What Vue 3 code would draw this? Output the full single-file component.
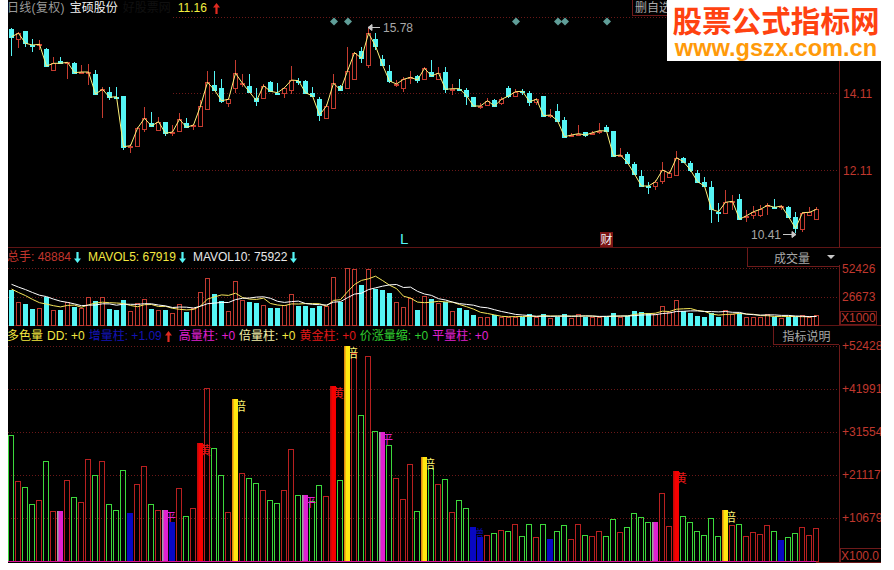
<script setup>
import { computed } from 'vue'

// all chart data is in page pixels x3, read off the chart: [type, top, bottom, wickTop, wickBottom]
const candleRows = [
  ['c',87,110,85,168],['r',100,118,95,143],['c',93,130,93,140],['c',135,135,118,155],['r',133,133,120,150],
  ['c',148,198,143,200],['r',190,210,172,210],['c',184,190,170,190],['r',187,187,185,236],['c',190,218,187,220],
  ['r',216,216,195,222],['r',216,216,193,255],['c',222,282,210,285],['r',268,268,262,355],['c',277,292,262,300],
  ['c',290,290,262,295],['c',287,440,287,451],['r',437,437,432,460],['r',385,438,382,440],['r',355,388,322,395],
  ['c',370,378,336,380],['r',365,390,352,390],['c',365,400,365,408],['r',396,396,375,408],['r',358,393,340,393],
  ['c',370,382,355,385],['r',375,375,372,390],['r',318,377,300,378],['r',247,327,213,330],['c',255,270,213,272],
  ['c',264,302,236,310],['r',298,308,295,320],['r',220,265,180,278],['r',250,250,222,260],['c',258,276,222,280],
  ['c',295,302,265,318],['r',257,294,252,297],['c',245,274,242,277],['c',278,278,250,282],['r',263,280,260,293],
  ['r',240,270,197,282],['c',242,242,235,255],['c',243,278,240,282],['c',280,288,262,290],['c',296,345,292,362],
  ['r',318,353,313,354],['r',250,323,222,325],['c',258,270,256,272],['r',213,264,140,266],['r',158,236,155,237],
  ['c',153,175,140,190],['r',100,195,85,203],['c',117,138,100,150],['c',177,195,165,197],['c',213,243,195,248],
  ['r',252,252,240,262],['r',238,263,230,275],['r',232,232,212,252],['c',228,240,225,248],['r',205,236,202,240],
  ['c',215,228,180,232],['r',219,238,202,240],['c',215,268,200,280],['r',266,266,252,285],['c',266,266,238,268],
  ['c',270,287,265,315],['c',292,318,290,320],['r',318,318,310,328],['r',302,315,295,318],['c',300,318,296,322],
  ['r',298,310,290,315],['c',265,288,258,295],['r',275,287,268,288],['c',274,274,268,285],['c',278,305,272,318],
  ['r',298,306,293,315],['c',289,347,288,349],['r',345,345,326,355],['c',334,362,312,365],['c',360,410,352,412],
  ['r',405,405,400,410],['r',401,401,375,405],['c',397,405,395,412],['r',398,398,392,406],['r',392,392,370,402],
  ['c',380,393,375,395],['c',393,468,393,470],['r',465,465,445,468],['c',462,488,457,492],['c',492,522,485,525],
  ['c',528,558,510,562],['c',558,558,545,582],['r',545,558,540,570],['r',510,543,485,552],['r',520,530,512,530],
  ['r',473,525,452,525],['c',473,485,470,488],['c',488,510,482,515],['c',520,545,510,550],['c',546,558,532,562],
  ['c',562,628,543,668],['c',635,635,608,665],['r',607,638,570,640],['r',604,604,585,630],['c',598,658,582,660],
  ['r',647,647,630,665],['r',635,645,618,658],['r',628,645,615,650],['r',616,616,608,646],['c',622,622,598,627],
  ['r',618,618,614,630],['c',620,650,618,652],['c',652,685,637,700],['r',638,688,635,696],['r',637,644,622,645],
  ['r',628,656,622,660],
]

const volumeRows = [
  ['c',150],['r',187],['c',192],['c',207],['r',204],['c',172],['r',210],['c',210],['r',185],['c',200],
  ['r',205],['r',172],['c',184],['r',172],['c',207],['c',210],['c',180],['r',213],['r',190],['r',178],
  ['c',207],['r',210],['c',210],['r',220],['r',193],['c',215],['r',205],['r',157],['r',115],['c',162],
  ['c',184],['r',213],['r',124],['r',180],['c',186],['c',188],['r',195],['c',203],['c',203],['r',195],
  ['r',162],['c',197],['c',197],['c',203],['c',197],['r',197],['r',112],['c',186],['r',85],['r',88],
  ['c',135],['r',88],['c',147],['c',150],['c',158],['r',186],['r',202],['r',175],['c',210],['r',168],
  ['c',178],['r',188],['c',185],['r',213],['c',204],['c',210],['c',225],['r',232],['r',232],['c',225],
  ['r',230],['r',232],['r',230],['c',230],['c',222],['r',232],['c',222],['r',234],['c',230],['c',222],
  ['r',234],['r',223],['c',230],['r',232],['r',232],['c',230],['c',218],['r',230],['c',228],['c',212],
  ['c',216],['c',220],['r',222],['r',198],['r',217],['r',181],['c',214],['c',218],['c',228],['c',230],
  ['c',220],['c',230],['r',210],['r',222],['c',218],['r',232],['r',232],['r',230],['r',223],['c',230],
  ['r',234],['c',230],['c',230],['r',226],['r',232],['r',226],
]

const flowRows = [
  ['g',271],['r',409],['g',427],['g',478],['r',466],['g',349],['r',499],['m',498],['r',406],['g',457],
  ['r',472],['r',343],['g',391],['r',349],['g',478],['g',496],['g',376],['b',504],['r',418],['r',364],
  ['g',478],['r',496],['m',496],['b',530],['r',430],['g',514],['r',490],['R',294],['r',130],['g',310],
  ['g',391],['r',502],['Y',162],['r',385],['g',400],['g',415],['r',436],['g',466],['g',475],['r',436],
  ['r',313],['g',451],['m',450],['g',469],['g',421],['r',454],['R',124],['g',406],['Y',4],['r',25],
  ['g',211],['r',34],['g',259],['m',262],['g',301],['r',400],['r',463],['r',358],['g',499],['Y',337],
  ['g',370],['r',418],['g',403],['r',502],['g',466],['g',490],['b',546],['b',576],['r',571],['g',565],
  ['r',556],['g',559],['r',538],['g',574],['g',538],['r',577],['g',538],['b',582],['g',559],['g',541],
  ['r',583],['r',538],['g',571],['r',574],['r',559],['g',574],['g',523],['r',562],['g',547],['g',505],
  ['g',517],['g',532],['m',532],['r',445],['r',544],['R',379],['g',514],['g',532],['g',559],['g',571],
  ['g',520],['g',574],['Y',496],['r',541],['g',538],['r',574],['r',562],['r',568],['r',541],['g',559],
  ['b',586],['g',577],['g',565],['r',547],['r',571],['r',550],
]

const signalLabels = { m: '平', b: '增', R: '黄', Y: '倍' }
// these bars have their label hidden behind the next column in the terminal
const unlabelled = [7, 17, 23, 67, 77, 92, 110]

const priceGrid = [17.5, 93.5, 170.5]
const volumeGrid = [268.5, 297.5]
const flowGrid = [346.5, 389.5, 432.5, 475.5, 518.5]
const diamonds = [334, 348, 516, 558, 565, 607]
const priceTicks = [
  { y: 94, text: '14.11' },
  { y: 171, text: '12.11' },
]
const volumeTicks = [
  { y: 269, text: '52426' },
  { y: 297, text: '26673' },
]
const flowTicks = [
  { y: 346, text: '+52428' },
  { y: 389, text: '+41991' },
  { y: 432, text: '+31554' },
  { y: 475, text: '+21117' },
  { y: 518, text: '+10679' },
]

const candles = computed(() =>
  candleRows.map(([kind, top, bottom, wickTop, wickBottom], i) => {
    const y = Math.round(top / 3) + 0.5
    return {
      kind,
      x: 9.5 + 7 * i,
      cx: 11.5 + 7 * i,
      y,
      h: Math.max(Math.round(bottom / 3) + 0.5 - y, 1),
      wickTop: wickTop / 3,
      wickBottom: wickBottom / 3,
      close: (kind === 'c' ? bottom : top) / 3,
    }
  }),
)

const closeLine = computed(() => candles.value.map((c) => `${c.cx},${c.close.toFixed(1)}`).join(' '))

const volumes = computed(() =>
  volumeRows.map(([kind, top], i) => {
    const y = Math.round(240 + top / 3) + 0.5
    return { kind, x: 9.5 + 7 * i, y, h: 325 - y, value: 255 - top }
  }),
)

function movingAverage(size) {
  const before = [150, 140, 135, 130, 125, 120, 110, 105, 100]
  const values = [...before, ...volumeRows.map(([, top]) => 255 - top)]
  const points = []
  for (let i = 0; i < volumeRows.length; i++) {
    const end = i + before.length + 1
    const slice = values.slice(end - size, end)
    const avg = slice.reduce((sum, v) => sum + v, 0) / size
    points.push(`${11.5 + 7 * i},${(240 + (255 - avg) / 3).toFixed(1)}`)
  }
  return points.join(' ')
}

const volumeMa5 = computed(() => movingAverage(5))
const volumeMa10 = computed(() => movingAverage(10))

const flowBars = computed(() =>
  flowRows.map(([kind, top], i) => ({
    kind,
    x: 8 + 7 * i,
    top: Math.round(345 + top / 3),
    label: unlabelled.includes(i) ? '' : signalLabels[kind] || '',
    solid: kind in signalLabels,
  })),
)
const hollowBars = computed(() => flowBars.value.filter((b) => !b.solid))
const solidBars = computed(() => flowBars.value.filter((b) => b.solid))
const labelledBars = computed(() => flowBars.value.filter((b) => b.label))
</script>

<template>
  <div class="terminal">
    <section class="pane pane--price">
      <div class="pane__head title-row">
        <span class="period">日线(复权)</span>
        <span class="stock">宝硕股份</span>
        <span class="ghost">好股票网</span>
        <span class="last">11.16</span>
        <svg class="arrow arrow--last" viewBox="0 0 7 11"><path d="M3.5 0 7 4.5H4.6V11H2.4V4.5H0Z" fill="#e02a20" /></svg>
      </div>
      <svg class="chart chart--price" viewBox="8 16 873 231">
        <line v-for="y in priceGrid" :key="y" class="grid" x1="173" x2="839" :y1="y" :y2="y" />
        <line class="axis" x1="839.5" x2="839.5" y1="16" y2="247" />
        <path v-for="x in diamonds" :key="x" class="diamond" :d="`M${x} 17.5l4 4-4 4-4-4z`" />
        <g v-for="c in candles" :key="c.x" :class="`candle candle--${c.kind}`">
          <line class="wick" :x1="c.cx" :x2="c.cx" :y1="c.wickTop" :y2="c.wickBottom" />
          <rect class="body" :x="c.x" :y="c.y" width="4" :height="c.h" />
        </g>
        <polyline class="close-line" :points="closeLine" />
        <path class="mark-line" d="M368 27.5h12M368 27.5l4-3v6z" />
        <text class="mark" x="383" y="32">15.78</text>
        <text class="mark" x="751" y="238.5">10.41</text>
        <path class="mark-line" d="M783 234.5h13M796 234.5l-4-3v6z" />
        <text class="flag-l" x="400" y="244">L</text>
        <rect class="flag-box" x="600" y="232" width="13" height="15" />
        <text class="flag-cai" x="600.5" y="244">财</text>
        <text v-for="t in priceTicks" :key="t.y" class="tick" x="843" :y="t.y + 4">{{ t.text }}</text>
      </svg>
      <button class="pick-btn" type="button">删自选</button>
    </section>

    <section class="pane pane--volume">
      <div class="pane__head">
        <span class="red first">总手: 48884</span>
        <svg class="arrow" viewBox="0 0 7 11"><path d="M3.5 11 7 6.5H4.6V0H2.4V6.5H0Z" fill="#55f5f5" /></svg>
        <span class="yellow gap">MAVOL5: 67919</span>
        <svg class="arrow" viewBox="0 0 7 11"><path d="M3.5 11 7 6.5H4.6V0H2.4V6.5H0Z" fill="#55f5f5" /></svg>
        <span class="white gap">MAVOL10: 75922</span>
        <svg class="arrow" viewBox="0 0 7 11"><path d="M3.5 11 7 6.5H4.6V0H2.4V6.5H0Z" fill="#55f5f5" /></svg>
      </div>
      <svg class="chart chart--volume" viewBox="8 265 873 60">
        <line v-for="y in volumeGrid" :key="y" class="grid" x1="8" x2="839" :y1="y" :y2="y" />
        <line class="axis" x1="839.5" x2="839.5" y1="265" y2="325" />
        <rect
          v-for="v in volumes"
          :key="v.x"
          :class="`vol vol--${v.kind}`"
          :x="v.x"
          :y="v.y"
          width="4"
          :height="v.h"
        />
        <polyline class="ma ma--five" :points="volumeMa5" />
        <polyline class="ma ma--ten" :points="volumeMa10" />
        <text v-for="t in volumeTicks" :key="t.y" class="tick" x="842" :y="t.y + 4">{{ t.text }}</text>
        <rect class="unit-box" x="840.5" y="311.5" width="36" height="13" />
        <text class="tick" x="841" y="322">X1000</text>
      </svg>
      <button class="corner-btn corner-btn--volume" type="button">
        成交量
        <i class="caret"></i>
      </button>
    </section>

    <section class="pane pane--flow">
      <div class="pane__head flow-head">
        <span class="yellow first">多色量</span>
        <span class="yellow">DD: +0</span>
        <span class="navy">增量柱: +1.09</span>
        <svg class="arrow arrow--tight" viewBox="0 0 7 11"><path d="M3.5 0 7 4.5H4.6V11H2.4V4.5H0Z" fill="#e02a20" /></svg>
        <span class="magenta gap-s">高量柱: +0</span>
        <span class="cream">倍量柱: <b>+0</b></span>
        <span class="red-bright">黄金柱: +0</span>
        <span class="green">价涨量缩: +0</span>
        <span class="magenta">平量柱: +0</span>
      </div>
      <svg class="chart chart--flow" viewBox="8 345 873 218">
        <defs>
          <clipPath id="flow-plot"><rect x="8" y="346" width="831" height="217" /></clipPath>
        </defs>
        <line v-for="y in flowGrid" :key="y" class="grid" x1="8" x2="839" :y1="y" :y2="y" />
        <line class="axis" x1="839.5" x2="839.5" y1="345" y2="563" />
        <g clip-path="url(#flow-plot)">
          <rect
            v-for="b in hollowBars"
            :key="b.x"
            :class="`flow flow--${b.kind}`"
            :x="b.x + 0.5"
            :y="b.top + 0.5"
            width="5"
            :height="561 - b.top"
          />
          <text
            v-for="b in labelledBars"
            :key="`label-${b.x}`"
            :class="`signal signal--${b.kind}`"
            :x="b.x + 2"
            :y="b.top + 12"
          >{{ b.label }}</text>
          <g v-for="b in solidBars" :key="`solid-${b.x}`">
            <rect :class="`flow flow--${b.kind}`" :x="b.x" :y="b.top" width="6" :height="561 - b.top" />
            <rect :class="`edge edge--${b.kind}`" :x="b.x" :y="b.top" width="1.5" :height="561 - b.top" />
          </g>
        </g>
        <line class="baseline" x1="8" x2="816" y1="561.5" y2="561.5" />
        <line class="axis" x1="816" x2="839" y1="562.5" y2="562.5" />
        <text v-for="t in flowTicks" :key="t.y" class="tick" x="842" :y="t.y + 4">{{ t.text }}</text>
        <rect class="unit-box" x="840.5" y="548.5" width="42" height="14" />
        <text class="tick" x="841" y="560">X100.0</text>
      </svg>
      <button class="corner-btn corner-btn--flow" type="button">指标说明</button>
    </section>

    <div class="stamp">
      <p class="stamp__name">股票公式指标网</p>
      <p class="stamp__url">www.gszx.com.cn</p>
    </div>
  </div>
</template>

<style>
html,
body {
  margin: 0;
  background: #fff;
}
</style>

<style scoped>
.terminal {
  position: relative;
  display: flex;
  flex-direction: column;
  width: 873px;
  height: 563px;
  margin-left: 8px;
  overflow: hidden;
  background: #000;
  font-family: "Liberation Sans", "Noto Sans CJK SC", sans-serif;
  font-size: 12px;
}

.pane {
  position: relative;
  flex: none;
}

.pane--price,
.pane--volume {
  border-bottom: 1px solid #5e1414;
}

.pane--price {
  height: 247px;
}

.pane--volume {
  height: 77px;
}

.pane--flow {
  height: 237px;
}

.pane__head {
  display: flex;
  align-items: center;
  box-sizing: border-box;
  height: 17px;
  padding-top: 2px;
  white-space: nowrap;
  line-height: 15px;
  overflow: hidden;
}

.title-row {
  height: 16px;
  padding-top: 1px;
  line-height: 15px;
  color: #a8a8a8;
}

.period {
  margin-left: -1px;
  color: #9a9a9a;
  letter-spacing: 0.3px;
}

.stock {
  margin-left: 5px;
  color: #f2f2f2;
}

.ghost {
  margin-left: 5px;
  color: #101010;
}

.last {
  margin-left: 7px;
  color: #f4f040;
}

.arrow {
  flex: none;
  width: 7px;
  height: 11px;
  margin-left: 3px;
}

.arrow--last {
  margin-left: 6px;
}

.arrow--tight {
  margin-left: -1px;
}

.first {
  margin-left: -1px;
}

.gap {
  margin-left: 7px;
}

.gap-s {
  margin-left: 3px;
}

.red {
  color: #c2362e;
}

.yellow {
  color: #f4e840;
}

.white {
  color: #e8e8e8;
}

.navy {
  color: #1414b4;
}

.magenta {
  color: #e020d0;
}

.cream {
  color: #f4f0a8;
}

.cream b {
  font-weight: 400;
  color: #f4e840;
}

.red-bright {
  color: #e01818;
}

.green {
  color: #30d030;
}

.flow-head {
  height: 19px;
  gap: 4px;
}

.chart {
  display: block;
  width: 873px;
  overflow: visible;
}

.chart--price {
  height: 231px;
}

.chart--volume {
  height: 60px;
}

.chart--flow {
  height: 218px;
}

.grid {
  stroke: #6a1818;
  stroke-width: 1;
  stroke-dasharray: 1 2;
}

.axis {
  stroke: #6e1a1a;
  stroke-width: 1;
}

.diamond {
  fill: #5f9e98;
}

.candle .wick,
.candle .body {
  shape-rendering: crispEdges;
}

.candle--c .wick {
  stroke: #55f5f5;
}

.candle--c .body {
  fill: #55f5f5;
  stroke: #55f5f5;
}

.candle--r .wick {
  stroke: #c63c30;
}

.candle--r .body {
  fill: #000;
  stroke: #c63c30;
}

.close-line {
  fill: none;
  stroke: #fff27a;
  stroke-width: 1;
}

.mark {
  fill: #a8a8a8;
  font-size: 12px;
}

.mark-line {
  fill: #c8c8c8;
  stroke: #c8c8c8;
  stroke-width: 1;
}

.flag-l {
  fill: #55f5f5;
  font-size: 15px;
}

.flag-box {
  fill: #7a1414;
}

.flag-cai {
  fill: #f0f0f0;
  font-size: 12px;
}

.tick {
  fill: #c0382e;
  font-size: 12px;
}

.unit-box {
  fill: none;
  stroke: #6e1a1a;
}

.vol {
  shape-rendering: crispEdges;
}

.vol--c {
  fill: #55f5f5;
  stroke: #55f5f5;
}

.vol--r {
  fill: #000;
  stroke: #c23a30;
}

.ma {
  fill: none;
  stroke-width: 1;
}

.ma--five {
  stroke: #f6e65a;
}

.ma--ten {
  stroke: #fff;
}

.flow {
  shape-rendering: crispEdges;
}

.flow--g {
  fill: none;
  stroke: #3cd83c;
}

.flow--r {
  fill: none;
  stroke: #b82020;
}

.flow--m {
  fill: #e020d0;
}

.flow--b {
  fill: #0808c4;
}

.flow--R {
  fill: #f60000;
}

.flow--Y {
  fill: #ffe810;
}

.edge {
  fill: transparent;
}

.edge--m {
  fill: #a0a0a0;
}

.edge--Y {
  fill: #e08a10;
}

.edge--R {
  fill: #c00808;
}

.signal {
  font-size: 12px;
}

.signal--m {
  fill: #e020d0;
}

.signal--b {
  fill: #0808a8;
}

.signal--R {
  fill: #e81818;
}

.signal--Y {
  fill: #f8f070;
}

.baseline {
  stroke: #d8109a;
  stroke-width: 1;
}

.pick-btn,
.corner-btn {
  position: absolute;
  margin: 0;
  padding: 0;
  background: #000;
  color: #a8a8a8;
  font: inherit;
  border: 1px solid #6e1a1a;
}

.pick-btn {
  top: -1px;
  left: 624px;
  width: 44px;
  height: 17px;
  padding-left: 2px;
  text-align: left;
  line-height: 16px;
}

.corner-btn {
  right: 42px;
  border-top: 0;
  border-right: 0;
}

.corner-btn--volume {
  top: 0;
  width: 92px;
  height: 19px;
  padding-right: 29px;
  text-align: right;
}

.corner-btn--flow {
  top: 0;
  width: 66px;
  height: 19px;
  text-align: center;
}

.caret {
  position: absolute;
  top: 7px;
  right: 4px;
  border-style: solid;
  border-width: 4px 4px 0;
  border-color: #c8c8c8 transparent transparent;
}

.stamp {
  position: absolute;
  top: 0;
  right: 0;
  width: 214px;
  height: 61px;
  padding: 6px 0 0 4px;
  box-sizing: border-box;
  background: #fff;
  text-align: center;
}

.stamp__name {
  margin: 0;
  color: #ff4210;
  font-size: 29.6px;
  font-weight: 700;
  line-height: 31px;
  white-space: nowrap;
}

.stamp__url {
  margin: 0;
  color: #ff9a0a;
  font-size: 23.6px;
  font-weight: 700;
  line-height: 23px;
  white-space: nowrap;
}
</style>
